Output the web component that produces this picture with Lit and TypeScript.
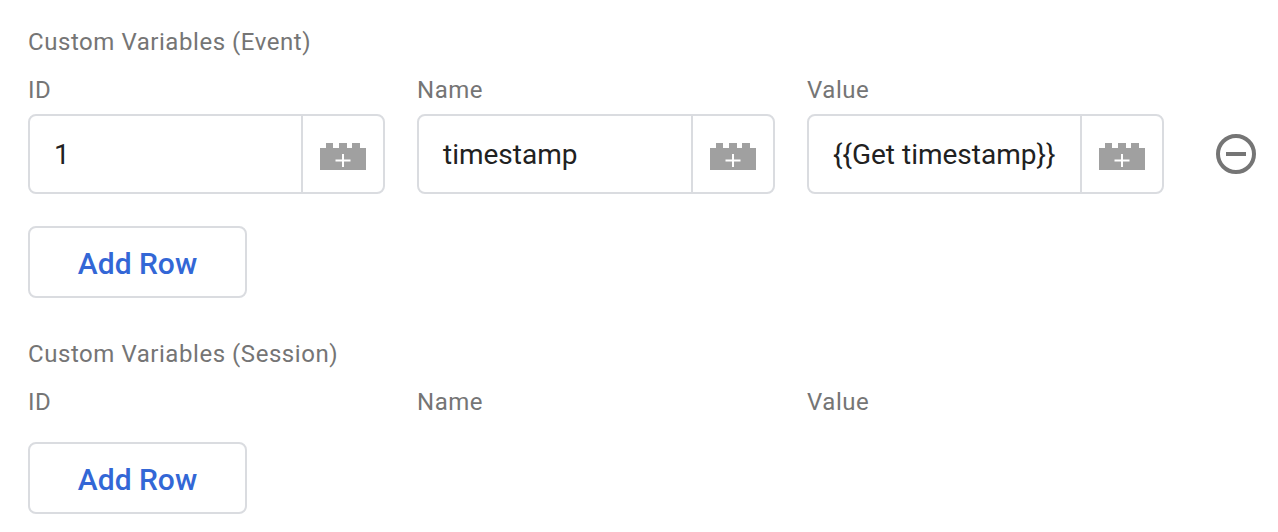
import { LitElement, html, css, svg } from 'lit';
import { customElement } from 'lit/decorators.js';

const brick = svg`<svg class="brick" width="46" height="27" viewBox="0 0 46 27">
  <path fill="#a0a0a0" d="M0 27V5h6V0h7v5h6V0h8v5h5V0h8v5h6v22z"/>
  <path fill="none" stroke="#fff" stroke-width="2" d="M23 11v13M15.500 17.500h15"/>
</svg>`;

@customElement('app-root')
export class AppRoot extends LitElement {
  static styles = css`
    :host {
      display: block;
      background: #fff;
      font-family: Roboto, "Liberation Sans", sans-serif;
      height: 532px;
      overflow: hidden;
    }

    .page {
      padding: 28px 0 0 28px;
    }

    .section {
      margin-bottom: 42px;
    }

    .title,
    .label {
      font-size: 24px;
      line-height: 28px;
      color: #757575;
      letter-spacing: 0.55px;
    }

    .labels,
    .fields {
      display: grid;
      grid-template-columns: 357px 358px 357px;
      column-gap: 32px;
    }

    .labels {
      margin-top: 20px;
      margin-bottom: 10px;
    }

    .row {
      display: flex;
      align-items: center;
    }

    .field {
      display: flex;
      height: 80px;
      box-sizing: border-box;
      border: 2px solid #dadce0;
      border-radius: 8px;
    }

    .value {
      flex: 1;
      min-width: 0;
      display: flex;
      align-items: center;
      padding-left: 24px;
      font-size: 28px;
      color: #212121;
      white-space: nowrap;
    }

    .picker {
      width: 82px;
      flex: none;
      box-sizing: border-box;
      border-left: 2px solid #dadce0;
      display: flex;
      align-items: center;
      justify-content: center;
      padding-top: 5px;
    }

    .remove {
      margin-left: 52px;
      display: block;
    }

    button {
      display: block;
      width: 219px;
      height: 72px;
      margin-top: 32px;
      background: #fff;
      border: 2px solid #dadce0;
      border-radius: 8px;
      color: #3367d6;
      font-family: inherit;
      font-size: 30px;
      font-weight: 500;
      padding: 2px 0 0;
    }

    .labels + button {
      margin-top: 26px;
    }
  `;

  render() {
    return html`
      <div class="page">
        <div class="section">
          <div class="title">Custom Variables (Event)</div>
          <div class="labels">
            <div class="label">ID</div>
            <div class="label">Name</div>
            <div class="label">Value</div>
          </div>
          <div class="row">
            <div class="fields">
              <div class="field"><div class="value">1</div><div class="picker">${brick}</div></div>
              <div class="field"><div class="value">timestamp</div><div class="picker">${brick}</div></div>
              <div class="field"><div class="value">{{Get timestamp}}</div><div class="picker">${brick}</div></div>
            </div>
            <svg class="remove" width="40" height="40" viewBox="0 0 40 40">
              <circle cx="20" cy="20" r="18" fill="none" stroke="#757575" stroke-width="4"/>
              <path d="M10 18h20v4H10z" fill="#757575"/>
            </svg>
          </div>
          <button>Add Row</button>
        </div>
        <div class="section">
          <div class="title">Custom Variables (Session)</div>
          <div class="labels">
            <div class="label">ID</div>
            <div class="label">Name</div>
            <div class="label">Value</div>
          </div>
          <button>Add Row</button>
        </div>
      </div>
    `;
  }
}
